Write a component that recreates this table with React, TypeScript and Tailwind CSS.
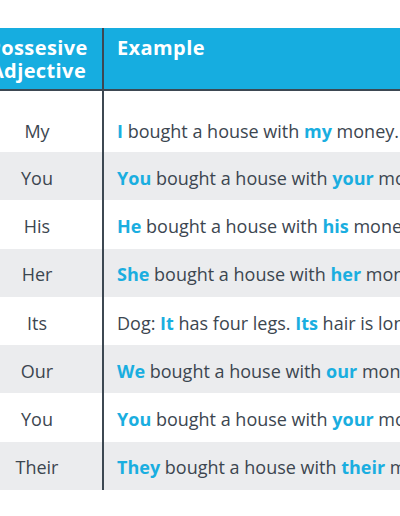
const rows: { left: string; parts: [string, boolean][] }[] = [
  { left: "My", parts: [["I", true], [" bought a house with ", false], ["my", true], [" money.", false]] },
  { left: "You", parts: [["You", true], [" bought a house with ", false], ["your", true], [" money.", false]] },
  { left: "His", parts: [["He", true], [" bought a house with ", false], ["his", true], [" money.", false]] },
  { left: "Her", parts: [["She", true], [" bought a house with ", false], ["her", true], [" money.", false]] },
  { left: "Its", parts: [["Dog: ", false], ["It", true], [" has four legs. ", false], ["Its", true], [" hair is long.", false]] },
  { left: "Our", parts: [["We", true], [" bought a house with ", false], ["our", true], [" money.", false]] },
  { left: "You", parts: [["You", true], [" bought a house with ", false], ["your", true], [" money.", false]] },
  { left: "Their", parts: [["They", true], [" bought a house with ", false], ["their", true], [" money.", false]] },
];

export default function App() {
  return (
    <div
      className="w-[400px] h-[516px] overflow-hidden bg-white pt-[28px]"
      style={{ fontFamily: '"Open Sans", "DejaVu Sans", sans-serif' }}
    >
      <div className="ml-[-28px] w-[640px]">
        {/* header */}
        <div className="flex h-[63px] bg-[#16ade0] border-b-2 border-[#3d4852] text-white font-bold text-[20px] leading-[23px] tracking-[0.4px]">
          <div className="w-[132px] shrink-0 border-r-2 border-[#3d4852] flex flex-col items-center justify-center pt-[1px] pl-[2px]">
            <span>Possesive</span>
            <span>Adjective</span>
          </div>
          <div className="pl-[13px] pt-[8px]">Example</div>
        </div>
        {/* body */}
        {rows.map((r, i) => (
          <div
            key={i}
            className={
              "flex text-[18px] text-[#3c4650] " +
              (i % 2 === 1 ? "bg-[#ebecee] " : "bg-white ") +
              (i === 0 ? "h-[61px]" : "h-[48.3px]")
            }
          >
            <div
              className={
                "w-[132px] shrink-0 border-r-2 border-[#3d4852] flex items-center justify-center " +
                (i === 0 ? "pt-[20px]" : "pt-[4px]")
              }
            >
              {r.left}
            </div>
            <div
              className={
                "pl-[13px] flex items-center whitespace-nowrap " + (i === 0 ? "pt-[20px]" : "pt-[4px]")
              }
            >
              {r.parts.map(([t, b], j) => (
                <span key={j} className={b ? "font-bold text-[#1aaee0] whitespace-pre" : "whitespace-pre"}>
                  {t}
                </span>
              ))}
            </div>
          </div>
        ))}
      </div>
    </div>
  );
}
